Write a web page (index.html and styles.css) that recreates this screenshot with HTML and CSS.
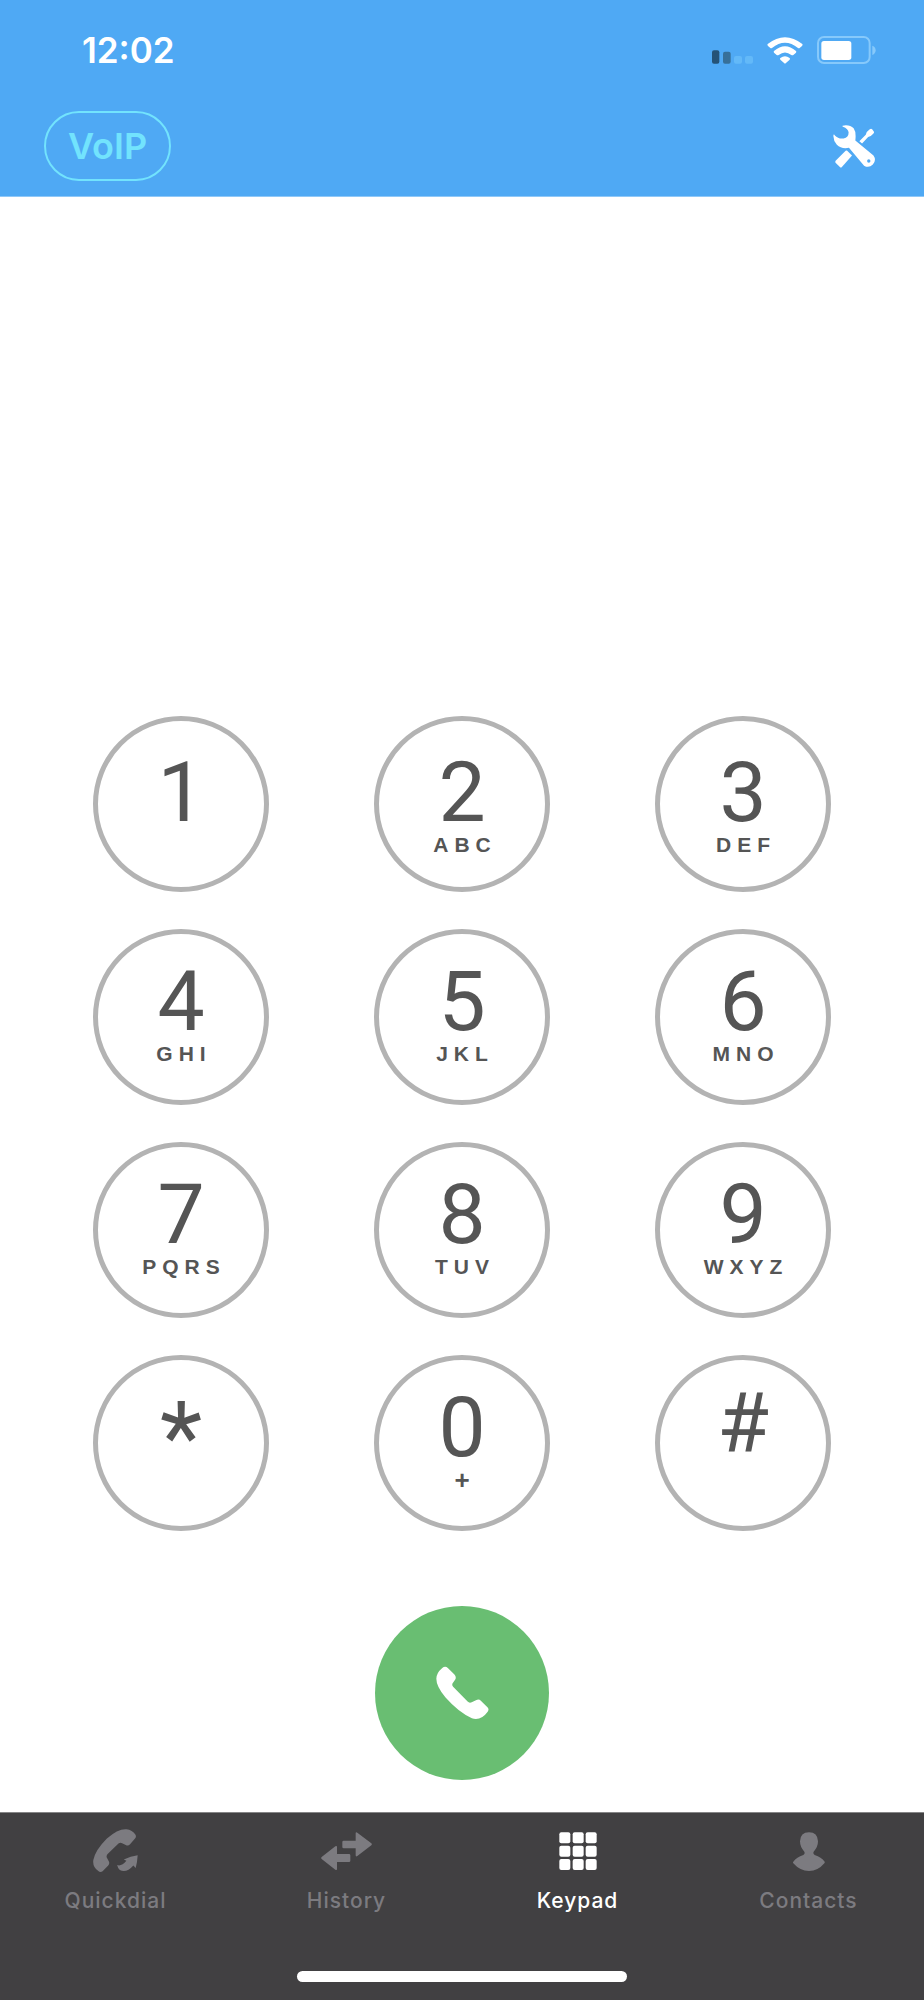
FILE: index.html
```html
<!DOCTYPE html>
<html lang="en">
<head>
  <meta charset="UTF-8" />
  <meta name="viewport" content="width=device-width, initial-scale=1.0"/>
  <title>Keypad</title>
  <link rel="stylesheet" href="styles.css">
</head>
<body>

  <header class="header">
    <div class="status-bar">
      <span class="time">12:02</span>
      <div class="status-icons">
        <svg class="signal" viewBox="0 0 123 42" aria-hidden="true">
          <rect x="0" y="1" width="22" height="40" rx="6" fill="#255377"/>
          <rect x="33" y="5" width="23" height="36" rx="6" fill="#377099"/>
          <rect x="66" y="18" width="24" height="23" rx="6" fill="#63b9f8"/>
          <rect x="99" y="18" width="24" height="23" rx="6" fill="#63b9f8"/>
        </svg>
        <svg class="wifi" viewBox="263 110 106 81" aria-hidden="true">
          <path d="M264 131Q316 90 368 131Q370 134 367 137L360 143Q358 145 355 143Q316 112 277 143Q274 145 272 143L265 137Q262 134 264 131Z"/>
          <path d="M283 152Q316 124 349 152Q351 154 349 157L341 164Q338 166 335 164Q316 149 297 164Q294 166 291 164L283 157Q281 154 283 152Z"/>
          <path d="M302 173Q316 162 330 173Q332 175 330 178L318 189Q316 191 314 189L302 178Q300 175 302 173Z"/>
        </svg>
        <svg class="battery" viewBox="413 108 177 84" aria-hidden="true">
          <rect x="416" y="111" width="155" height="78" rx="18" fill="none" stroke="#86c9fb" stroke-width="6"/>
          <rect x="426" y="123" width="90" height="57" rx="8" fill="#fff"/>
          <path d="M579 137Q589 141 589 151Q589 161 579 165Z" fill="#86c9fb"/>
        </svg>
      </div>
    </div>
    <div class="nav-bar">
      <button class="voip">VoIP</button>
      <button class="settings" aria-label="Settings">
        <svg viewBox="461 376 127 128" aria-hidden="true">
          <path d="M539 424L558 405L561 397L570 389Q574 386 577 389L582 395Q584 398 581 401L573 409L565 412L547 431Z"/>
          <path d="M502 452L517 467L487 501Q484 504 481 501L468 488Q466 485 469 482L498 453Q500 451 502 452Z"/>
          <path fill-rule="evenodd" d="M489 378Q510 374 522 386Q530 397 527 422L581 467A21 21 0 0 1 553 497L508 444Q485 448 472 435Q460 421 462 405Q464 403 466 407Q476 418 492 416Q507 413 507 398Q506 387 490 381Q487 379 489 378ZM567 478A5 5 0 1 0 567 488A5 5 0 1 0 567 478Z"/>
        </svg>
      </button>
    </div>
  </header>

  <main class="dialer">
    <div class="keypad">
      <button class="key key-top"><span class="digit">1</span></button>
      <button class="key key-top"><span class="digit">2</span><span class="letters">ABC</span></button>
      <button class="key key-top"><span class="digit">3</span><span class="letters">DEF</span></button>
      <button class="key"><span class="digit">4</span><span class="letters">GHI</span></button>
      <button class="key"><span class="digit">5</span><span class="letters">JKL</span></button>
      <button class="key"><span class="digit">6</span><span class="letters">MNO</span></button>
      <button class="key"><span class="digit">7</span><span class="letters">PQRS</span></button>
      <button class="key"><span class="digit">8</span><span class="letters">TUV</span></button>
      <button class="key"><span class="digit">9</span><span class="letters">WXYZ</span></button>
      <button class="key"><span class="digit star">*</span></button>
      <button class="key"><span class="digit">0</span><span class="letters plus">+</span></button>
      <button class="key"><span class="digit hash">#</span></button>
    </div>
    <button class="call" aria-label="Call">
      <svg viewBox="227 230 161 162" aria-hidden="true">
        <path d="M246 235Q255 227 263 235L283 255Q290 263 285 271L277 282Q275 288 279 292L323 337Q329 343 337 338L350 332Q358 329 364 335L384 355Q389 361 384 368Q364 396 336 388Q296 370 256 325Q228 292 228 268Q228 250 246 235Z"/>
      </svg>
    </button>
  </main>

  <footer class="footer">
    <nav class="tabs">
      <a class="tab" href="#quickdial">
        <svg width="45" height="44" viewBox="161 87 136 131" aria-hidden="true">
          <path d="M190 214Q183 219 177 213Q159 200 162 180Q168 150 203 115Q237 85 262 87Q280 89 289 103Q293 109 288 115L273 132Q267 138 260 134L249 129Q243 126 238 130L206 161Q200 167 203 173L209 184Q212 191 207 196Z"/>
          <path d="M234 195Q247 200 262 182L254 178Q275 168 296 165Q295 185 290 204L283 196Q262 220 242 210Q236 205 234 195Z"/>
        </svg>
        <span>Quickdial</span>
      </a>
      <a class="tab" href="#history">
        <svg width="51" height="44" viewBox="845 86 153 132" aria-hidden="true">
          <path d="M913 121H949V99Q949 94 954 97L996 129Q999 132 996 135L954 167Q949 170 949 165V144H913Q909 144 909 140V125Q909 121 913 121Z"/>
          <path d="M929 185H893V206Q893 211 888 208L847 176Q844 173 847 170L888 138Q893 135 893 140V161H929Q933 161 933 165V181Q933 185 929 185Z"/>
        </svg>
        <span>History</span>
      </a>
      <a class="tab active" href="#keypad">
        <svg width="38" height="44" viewBox="175 87 114 132" aria-hidden="true">
          <rect x="176" y="97" width="33" height="33" rx="6"/>
          <rect x="216" y="97" width="33" height="33" rx="6"/>
          <rect x="255" y="97" width="33" height="33" rx="6"/>
          <rect x="176" y="137" width="33" height="33" rx="6"/>
          <rect x="216" y="137" width="33" height="33" rx="6"/>
          <rect x="255" y="137" width="33" height="33" rx="6"/>
          <rect x="176" y="177" width="33" height="33" rx="6"/>
          <rect x="216" y="177" width="33" height="33" rx="6"/>
          <rect x="255" y="177" width="33" height="33" rx="6"/>
        </svg>
        <span>Keypad</span>
      </a>
      <a class="tab" href="#contacts">
        <svg width="32" height="44" viewBox="879 87 96 132" aria-hidden="true">
          <path d="M927 97Q953 97 954 124Q954 141 941 155Q938 161 944 165Q964 172 974 185Q975 187 973 190Q954 213 927 213Q900 213 880 190Q878 187 880 185Q890 172 910 165Q916 161 913 155Q900 141 900 124Q901 97 927 97Z"/>
        </svg>
        <span>Contacts</span>
      </a>
    </nav>
    <div class="home-indicator"></div>
  </footer>

</body>
</html>
```
FILE: styles.css
```css
* {
  box-sizing: border-box;
}

body {
  margin: 0;
  min-height: 100vh;
  display: flex;
  flex-direction: column;
  background: #fff;
  font-family: Inter, "Liberation Sans", sans-serif;
}

button {
  margin: 0;
  padding: 0;
  border: none;
  background: none;
  font-family: inherit;
  cursor: pointer;
}

svg {
  display: block;
  fill: currentColor;
}

/* header */
.header {
  background: #4fa9f4;
  border-bottom: 1px solid #8fc8f8;
  color: #fff;
}

.status-bar {
  display: flex;
  justify-content: space-between;
  align-items: center;
  height: 100px;
  padding: 0 48px 0 82px;
}

.time {
  font-size: 35px;
  font-weight: 600;
}

.status-icons {
  display: flex;
  align-items: flex-end;
  gap: 14px;
}

.signal {
  width: 41px;
  height: 14px;
}

.wifi {
  width: 36px;
  height: 27px;
}

.battery {
  width: 59px;
  height: 28px;
}

.nav-bar {
  display: flex;
  justify-content: space-between;
  align-items: center;
  padding: 11px 48px 15px 44px;
}

.voip {
  width: 127px;
  height: 70px;
  border: 2px solid #72e3fd;
  border-radius: 35px;
  color: #72e3fd;
  font-size: 36px;
  font-weight: 600;
}

.settings {
  color: #fff;
}

.settings svg {
  width: 43px;
  height: 43px;
}

/* dialer */
.dialer {
  flex: 1;
  display: flex;
  flex-direction: column;
  justify-content: flex-end;
  align-items: center;
  gap: 75px;
  padding: 0 93px 32px;
}

.keypad {
  width: 100%;
  display: grid;
  grid-template-columns: repeat(3, 176px);
  justify-content: space-between;
  row-gap: 37px;
}

.key {
  display: flex;
  flex-direction: column;
  align-items: center;
  height: 176px;
  padding-top: 26px;
  border: 5px solid #b3b3b3;
  border-radius: 50%;
  color: #555;
  font-family: "Liberation Sans", Arial, sans-serif;
}

.key-top {
  padding-top: 30px;
}

.digit {
  font-family: Roboto, "Liberation Sans", sans-serif;
  font-size: 84px;
  line-height: 84px;
}

.star {
  font-size: 98px;
  line-height: 104px;
}

.hash {
  line-height: 76px;
}

.letters {
  font-size: 21px;
  font-weight: 700;
  line-height: 20px;
  letter-spacing: 6px;
  margin-right: -6px;
}

.plus {
  font-size: 26px;
}

.call {
  display: flex;
  justify-content: center;
  align-items: center;
  width: 174px;
  height: 174px;
  border-radius: 50%;
  background: #69be72;
  color: #fff;
}

.call svg {
  width: 53px;
  height: 54px;
}

/* tab bar */
.footer {
  background: #414042;
  border-top: 1px solid #858586;
  padding: 16px 0 18px;
}

.tabs {
  display: grid;
  grid-template-columns: repeat(4, 1fr);
}

.tab {
  display: flex;
  flex-direction: column;
  align-items: center;
  gap: 14px;
  color: #7c7b80;
  font-size: 21px;
  font-weight: 500;
  line-height: 28px;
  letter-spacing: 1px;
  text-decoration: none;
}

.tab.active {
  color: #fff;
}

.home-indicator {
  width: 330px;
  height: 11px;
  margin: 56px auto 0;
  border-radius: 6px;
  background: #fff;
}
```
